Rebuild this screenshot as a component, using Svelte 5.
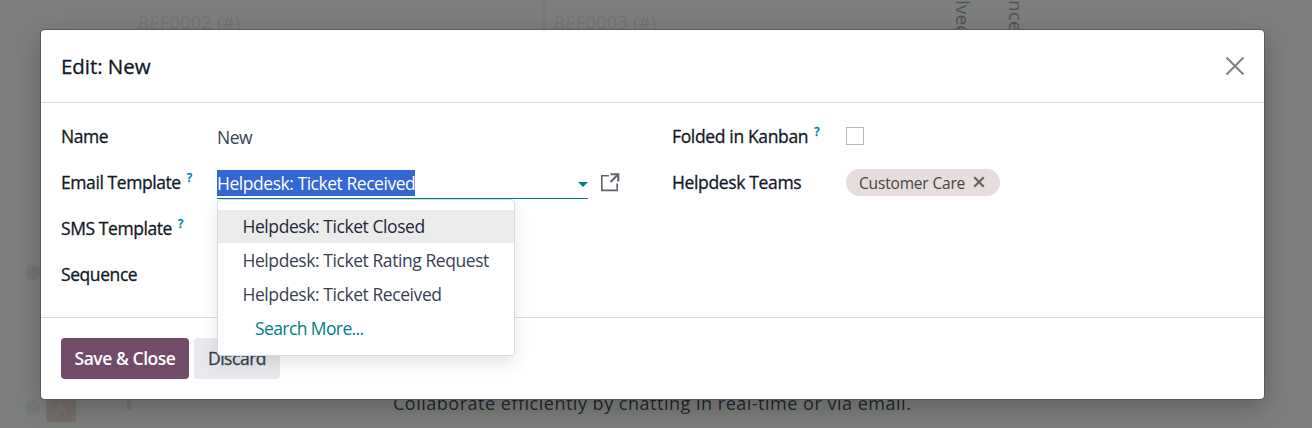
<script>
  let name = $state('New');
  let folded = $state(false);
  let open = $state(true);
  let active = $state(0);
  let template = $state('Helpdesk: Ticket Received');

  const templates = [
    'Helpdesk: Ticket Closed',
    'Helpdesk: Ticket Rating Request',
    'Helpdesk: Ticket Received'
  ];

  let teams = $state(['Customer Care']);

  function select(item) {
    template = item;
    open = false;
  }
</script>

<div class="page">
  <!-- Kanban view behind the dialog -->
  <div class="kanban" aria-hidden="true">
    <div class="gutter"></div>
    <div class="lane first"><span>REF0002 (#)</span></div>
    <div class="lane"><span>REF0003 (#)</span></div>
    <div class="folded">lved</div>
    <div class="folded">nce</div>
  </div>
  <div class="marks" aria-hidden="true">
    <span class="dot red"></span>
    <div class="record">
      <span class="dot"></span>
      <span class="avatar">A</span>
      <span class="bar"></span>
    </div>
  </div>
  <p class="hint">Collaborate efficiently by chatting in real-time or via email.</p>

  <div class="backdrop">
    <div class="modal" role="dialog" aria-label="Edit: New">
      <header>
        <h4>Edit: New</h4>
        <button class="close" aria-label="Close">
          <svg width="20" height="20" viewBox="0 0 20 20">
            <path d="M1.5 1.5L18.5 18.5M18.5 1.5L1.5 18.5" />
          </svg>
        </button>
      </header>

      <main>
        <div class="group">
          <div class="row">
            <span class="label">Name</span>
            <span class="value">{name}</span>
          </div>
          <div class="row">
            <span class="label">Email Template<sup>?</sup></span>
            <div class="many2one">
              <div class="input">
                <span class="selection">{template}</span>
                <button class="caret" aria-label="Toggle" onclick={() => (open = !open)}></button>
              </div>
              {#if open}
                <ul class="dropdown">
                  {#each templates as item, i}
                    <li>
                      <button class:active={i === active} onmouseenter={() => (active = i)} onclick={() => select(item)}>{item}</button>
                    </li>
                  {/each}
                  <li><button class="more">Search More...</button></li>
                </ul>
              {/if}
            </div>
            <button class="external" aria-label="Internal link">
              <svg width="20" height="20" viewBox="0 0 20 20">
                <path d="M9 2.7H1.8V17.4H17.2V10.5" stroke-width="1.6" />
                <path d="M10.5 1.2H18.3V8.5M18 1.5L10.5 9" stroke-width="2.1" />
              </svg>
            </button>
          </div>
          <div class="row">
            <span class="label">SMS Template<sup>?</sup></span>
          </div>
          <div class="row">
            <span class="label">Sequence</span>
          </div>
        </div>

        <div class="group right">
          <div class="row">
            <span class="label">Folded in Kanban<sup>?</sup></span>
            <input type="checkbox" bind:checked={folded} aria-label="Folded in Kanban" />
          </div>
          <div class="row">
            <span class="label">Helpdesk Teams</span>
            {#each teams as team}
              <span class="tag">
                {team}
                <button aria-label="Delete" onclick={() => (teams = teams.filter((t) => t !== team))}>
                  <svg width="12" height="12" viewBox="0 0 12 12">
                    <path d="M1.2 1.2L10.8 10.8M10.8 1.2L1.2 10.8" />
                  </svg>
                </button>
              </span>
            {/each}
          </div>
        </div>
      </main>

      <footer>
        <button class="btn primary">Save &amp; Close</button>
        <button class="btn secondary">Discard</button>
      </footer>
    </div>
  </div>
</div>

<style>
  :global(body) {
    overflow: hidden;
  }

  .page {
    position: relative;
    box-sizing: border-box;
    height: 428px;
    overflow: hidden;
    background: #7d7f7d;
    color: #374151;
    font-family: 'Open Sans', 'Noto Sans', sans-serif;
    font-size: 17.5px;
    line-height: 24px;
    letter-spacing: -0.46px;
  }

  button {
    border: 0;
    padding: 0;
    background: none;
    color: inherit;
    font: inherit;
    letter-spacing: inherit;
    text-align: left;
  }

  svg {
    display: block;
    fill: none;
  }

  /* Background view */
  .kanban {
    display: flex;
    height: 110px;
    color: #737573;
  }

  .gutter {
    box-sizing: border-box;
    width: 87px;
    border-right: 1px solid #7a7c7a;
  }

  .lane {
    box-sizing: border-box;
    width: 415px;
    padding: 10px 0 0 8px;
    border-left: 4px solid #7d7878;
    font-size: 18px;
    letter-spacing: 0.35px;
  }

  .lane.first {
    width: 416px;
    margin-left: 39px;
    padding-left: 11px;
    border-left: 1px solid #7a7c7a;
  }

  .folded {
    width: 24px;
    margin-right: 29px;
    color: #515357;
    font-size: 19px;
    writing-mode: vertical-rl;
    line-height: 21px;
    letter-spacing: 0.1px;
  }

  .folded:nth-child(4) {
    margin-left: -8px;
  }

  .marks {
    display: flex;
    flex-direction: column;
    gap: 118px;
    padding: 155px 0 0 25px;
  }

  .record {
    display: flex;
    align-items: center;
    gap: 6px;
  }

  .dot {
    width: 15px;
    height: 15px;
    border-radius: 50%;
    background: #747876;
  }

  .dot.red {
    background: #7c7373;
  }

  .record .dot {
    margin-top: -6px;
  }

  .avatar {
    width: 30px;
    height: 24px;
    border-radius: 3px;
    background: #746e6c;
    color: #7d7776;
    line-height: 20px;
    text-align: center;
  }

  .bar {
    width: 4px;
    height: 24px;
    margin: -24px 0 0 45px;
    background: #757170;
  }

  .hint {
    position: absolute;
    left: 393px;
    bottom: 13px;
    margin: 0;
    color: #25272e;
    font-size: 18px;
    letter-spacing: 0.51px;
    white-space: nowrap;
  }

  .backdrop {
    position: absolute;
    inset: 0;
    display: flex;
    padding: 30px 48px 29px 41px;
  }

  .modal {
    display: flex;
    flex: 1;
    flex-direction: column;
    min-width: 0;
    border-radius: 4px;
    background: #fff;
    box-shadow: 0 0 0 1px #5c5b5b, 0 8px 28px rgba(0, 0, 0, 0.25);
  }

  header {
    box-sizing: border-box;
    display: flex;
    align-items: center;
    justify-content: space-between;
    height: 73px;
    padding: 0 19px 0 20px;
    border-bottom: 1px solid #d8dadd;
  }

  h4 {
    margin: 0;
    padding-bottom: 1px;
    color: #111827;
    font-size: 20.5px;
    font-weight: 400;
    letter-spacing: -0.05px;
    -webkit-text-stroke: 0.3px;
  }

  .close path {
    stroke: #808080;
    stroke-width: 2;
  }

  main {
    display: flex;
    box-sizing: border-box;
    height: 214px;
    padding: 11px 20px;
  }

  .group {
    width: 611px;
  }

  .group.right {
    flex: 1;
    width: auto;
  }

  .row {
    display: flex;
    align-items: center;
    height: 46px;
  }

  .label {
    width: 156px;
    padding-bottom: 2px;
    color: #111827;
    letter-spacing: -0.42px;
    -webkit-text-stroke: 0.3px;
  }

  .right .label {
    width: 174px;
    letter-spacing: -0.35px;
  }

  .tag {
    margin-bottom: 2px;
  }

  sup {
    position: relative;
    top: -7px;
    margin-left: 6px;
    color: #0180a5;
    font-size: 12px;
    font-weight: 600;
    line-height: 0;
    vertical-align: baseline;
  }

  .many2one {
    position: relative;
    width: 371px;
  }

  .input {
    box-sizing: border-box;
    display: flex;
    align-items: center;
    justify-content: space-between;
    height: 32px;
    border-bottom: 1px solid #017e84;
  }

  .selection {
    height: 26px;
    background: #3367d1;
    color: #fff;
    line-height: 27px;
  }

  .caret {
    margin-top: 4px;
    border: 5px solid transparent;
    border-top-color: #017e84;
    border-bottom: 0;
  }

  .dropdown {
    position: absolute;
    top: 100%;
    left: 0;
    z-index: 1;
    box-sizing: border-box;
    width: 298px;
    margin: 0;
    padding: 10px 0 9px;
    border: 1px solid #d8dadd;
    border-radius: 4px;
    background: #fff;
    box-shadow: 0 8px 16px rgba(0, 0, 0, 0.1);
    list-style: none;
  }

  .dropdown button {
    display: block;
    box-sizing: border-box;
    width: 100%;
    height: 33px;
    margin-bottom: 1px;
    padding: 0 0 2px 24.5px;
    letter-spacing: -0.43px;
    white-space: nowrap;
  }

  .dropdown .active {
    background: #ebebeb;
    color: #1f2937;
  }

  .dropdown .more {
    padding-left: 37px;
    color: #017e84;
    letter-spacing: -0.6px;
  }

  .external {
    margin-left: 12px;
  }

  .external path {
    stroke: #5f636f;
  }

  input[type='checkbox'] {
    width: 18px;
    height: 18px;
    margin: 0 0 3px;
    border: 1px solid #b8babb;
    background: #fff;
    appearance: none;
  }

  .tag {
    box-sizing: border-box;
    display: flex;
    align-items: center;
    gap: 8px;
    height: 27px;
    padding: 2px 15px 0 13px;
    border-radius: 14px;
    background: #e6dddc;
    color: #444;
    font-size: 15.5px;
    letter-spacing: -0.17px;
  }

  .tag button {
    margin-top: -3px;
  }

  .tag path {
    stroke: #666;
    stroke-width: 2.2;
  }

  footer {
    display: flex;
    gap: 5px;
    padding: 20px;
    border-top: 1px solid #d8dadd;
  }

  .btn {
    height: 41px;
    padding-bottom: 2px;
    border-radius: 4px;
    text-align: center;
  }

  .primary {
    width: 128px;
    background: #714b67;
    color: #fff;
    font-weight: 600;
  }

  .secondary {
    width: 86px;
    background: #e7e9ed;
    color: #374151;
    -webkit-text-stroke: 0.3px;
  }
</style>
